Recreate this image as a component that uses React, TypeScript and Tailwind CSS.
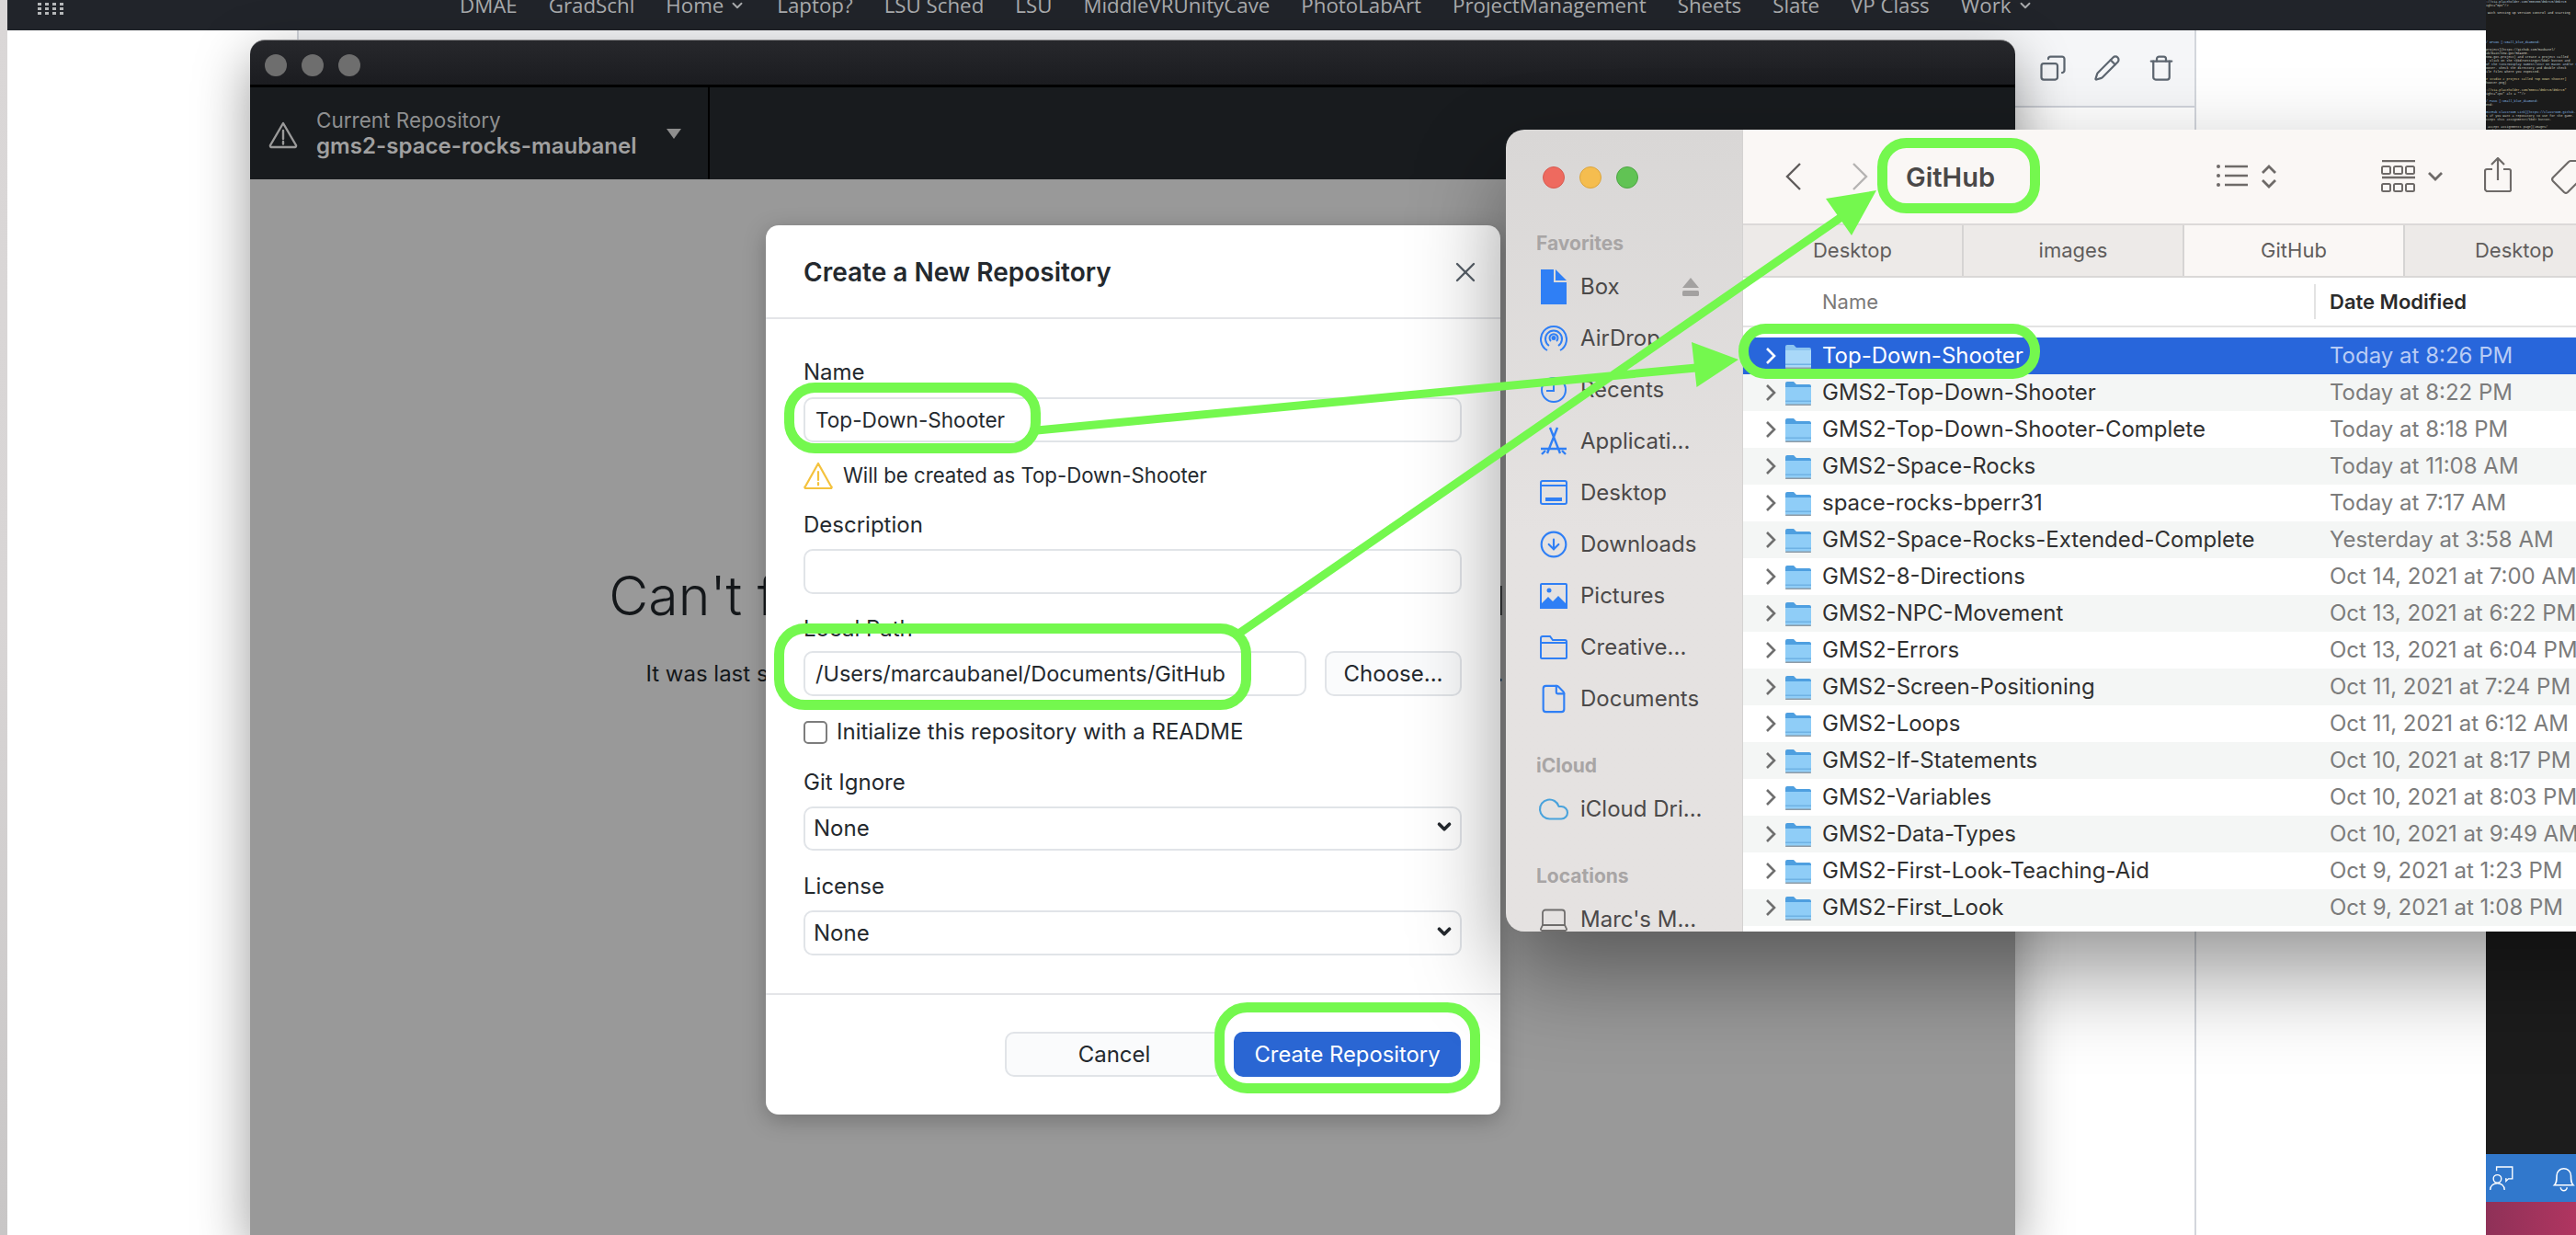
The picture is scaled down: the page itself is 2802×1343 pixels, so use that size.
import {
  ChevronDown,
  CircleArrowDown,
  Cloud,
  Copy,
  File,
  Laptop,
  Pencil,
  Trash,
  X,
} from "lucide-react";
import type { ReactNode } from "react";

const INTER = "font-['Inter',sans-serif]";

const navLinks = [
  ["DMAE", false],
  ["GradSchl", false],
  ["Home", true],
  ["Laptop?", false],
  ["LSU Sched", false],
  ["LSU", false],
  ["MiddleVRUnityCave", false],
  ["PhotoLabArt", false],
  ["ProjectManagement", false],
  ["Sheets", false],
  ["Slate", false],
  ["VP Class", false],
  ["Work", true],
] as const;

const files = [
  ["Top-Down-Shooter", "Today at 8:26 PM"],
  ["GMS2-Top-Down-Shooter", "Today at 8:22 PM"],
  ["GMS2-Top-Down-Shooter-Complete", "Today at 8:18 PM"],
  ["GMS2-Space-Rocks", "Today at 11:08 AM"],
  ["space-rocks-bperr31", "Today at 7:17 AM"],
  ["GMS2-Space-Rocks-Extended-Complete", "Yesterday at 3:58 AM"],
  ["GMS2-8-Directions", "Oct 14, 2021 at 7:00 AM"],
  ["GMS2-NPC-Movement", "Oct 13, 2021 at 6:22 PM"],
  ["GMS2-Errors", "Oct 13, 2021 at 6:04 PM"],
  ["GMS2-Screen-Positioning", "Oct 11, 2021 at 7:24 PM"],
  ["GMS2-Loops", "Oct 11, 2021 at 6:12 AM"],
  ["GMS2-If-Statements", "Oct 10, 2021 at 8:17 PM"],
  ["GMS2-Variables", "Oct 10, 2021 at 8:03 PM"],
  ["GMS2-Data-Types", "Oct 10, 2021 at 9:49 AM"],
  ["GMS2-First-Look-Teaching-Aid", "Oct 9, 2021 at 1:23 PM"],
  ["GMS2-First_Look", "Oct 9, 2021 at 1:08 PM"],
];

// each entry is one 4px line of the editor behind the windows, "" is a blank line
const codeLines: [string, string][] = [
  ["#b4c6d8", "://via.placeholder.com/300x50/d5b7c5/d5b7c5"],
  ["#cfcfc2", "ight=\"0px\"/>"],
  ["", ""],
  ["#dcdcd0", " with setting up version control and starting"],
  ["", ""],
  ["", ""],
  ["", ""],
  ["", ""],
  ["", ""],
  ["", ""],
  ["", ""],
  ["#86bbe4", "/ DPCOK [:small_blue_diamond:"],
  ["", ""],
  ["#cfcfc2", "project](https://github.com/maubanel/"],
  ["#cfcfc2", "ub/main/new-got/README."],
  ["#cfcfc2", "new-got-project) and create a project called"],
  ["#cfcfc2", ". Click on the <kbd>Settings</kbd> button and"],
  ["#b4c6d8", "of the <ins>Display Names</ins> on macOS and/or Windows"],
  ["#cfcfc2", "ooter. Check the directory and double check"],
  ["#cfcfc2", "ile files where you expected."],
  ["", ""],
  ["#d8c690", "e studio 2 project called Top Down Shooter]"],
  ["#cfcfc2", "hooter.png)"],
  ["", ""],
  ["#d8c690", "://via.placeholder.com/500x2/d5b7c5/d5b7c5\""],
  ["#cfcfc2", "ight=\"2px\" alt = \"\"/>"],
  ["", ""],
  ["#86bbe4", "/ PUCK [:small_blue_diamond:"],
  ["#cfcfc2", "end:"],
  ["", ""],
  ["#86bbe4", "GitHub Classroom Link](https://classroom.github."],
  ["#cfcfc2", "s if you want a repository to use for the game."],
  ["#cfcfc2", "ccept this assignment</kbd> button."],
  ["", ""],
  ["#cfcfc2", " accept assignments page](images/"],
  ["#cfcfc2", "ome/"],
];

function Folder({ selected }: { selected?: boolean }) {
  return (
    <svg width="28" height="27" viewBox="0 0 28 27" className="shrink-0">
      <path d="M0 3a2 2 0 0 1 2-2h7l3 3h14a2 2 0 0 1 2 2v5H0z" fill={selected ? "#8cc4f0" : "#4e9fe0"} />
      <path d="M0 7h28v18a1.5 1.5 0 0 1-1.5 1.5h-25A1.5 1.5 0 0 1 0 25z" fill={selected ? "#a9d8f8" : "#8fcdf7"} />
      <rect x="0" y="21.5" width="28" height="1.5" fill="#6fb2e4" />
      <rect x="0" y="25.5" width="28" height="1.5" rx="0.7" fill="#8e9ba6" />
    </svg>
  );
}

function Disclosure({ selected }: { selected?: boolean }) {
  return (
    <svg width="12" height="20" viewBox="0 0 12 20" className="shrink-0">
      <path d="M2 2l8 8-8 8" fill="none" stroke={selected ? "#ffffff" : "#6f6f6f"} strokeWidth="2.6" />
    </svg>
  );
}

const BLUE = "#2f7ff5";

const sidebarIcons = {
  box: (
    <svg width="28" height="38" viewBox="0 0 28 38">
      <path d="M0 0h14v14h14v24H0z" fill={BLUE} />
      <path d="M16 0l12 12H16z" fill={BLUE} />
    </svg>
  ),
  airdrop: (
    <svg width="30" height="32" viewBox="0 0 30 32" fill="none" stroke={BLUE} strokeWidth="2">
      <path d="M8 29A14 14 0 1 1 22 29" />
      <path d="M10 24A9 9 0 1 1 20 24" />
      <path d="M12 19A4.5 4.5 0 1 1 18 19" />
      <circle cx="15" cy="15.500" r="1.500" fill={BLUE} />
    </svg>
  ),
  recents: (
    <svg width="30" height="30" viewBox="0 0 30 30" fill="none" stroke={BLUE} strokeWidth="2">
      <circle cx="15" cy="15" r="13" />
      <path d="M15 6v10H7" />
    </svg>
  ),
  apps: (
    <svg width="30" height="32" viewBox="0 0 30 32" fill="none" stroke={BLUE} strokeWidth="2.4">
      <path d="M11 1l11 28M19 1L8 29M1 24h28" />
      <path d="M2 30l4-4M28 30l-4-4" />
    </svg>
  ),
  desktop: (
    <svg width="30" height="28" viewBox="0 0 30 28" fill="none" stroke={BLUE} strokeWidth="2">
      <rect x="1" y="1" width="28" height="25" rx="2" />
      <path d="M1 6h28" />
      <rect x="6" y="19" width="18" height="4" fill={BLUE} stroke="none" />
    </svg>
  ),
  downloads: <CircleArrowDown size={32} color={BLUE} strokeWidth={1.6} />,
  pictures: (
    <svg width="30" height="28" viewBox="0 0 30 28">
      <rect x="0" y="0" width="30" height="28" rx="2" fill={BLUE} />
      <rect x="2" y="2" width="26" height="20" fill="#e5e2e1" />
      <circle cx="10" cy="8" r="2.500" fill={BLUE} />
      <path d="M0 24l9-9 5 5 6-6 10 10v4H0z" fill={BLUE} />
    </svg>
  ),
  creative: (
    <svg width="30" height="26" viewBox="0 0 30 26" fill="none" stroke={BLUE} strokeWidth="2">
      <path d="M1 3a2 2 0 0 1 2-2h8l3 4h13a2 2 0 0 1 2 2v17a1 1 0 0 1-1 1H2a1 1 0 0 1-1-1z" />
      <path d="M1 8h28" />
    </svg>
  ),
  documents: <File size={34} color={BLUE} strokeWidth={1.5} />,
  cloud: <Cloud size={36} color="#4aa3dc" strokeWidth={1.4} />,
  laptop: <Laptop size={38} color="#6f6d6c" strokeWidth={1.2} />,
};

function SidebarHeading({ children, className }: { children: ReactNode; className: string }) {
  return <div className={`h-[28px] pl-[33px] text-[21px] font-bold leading-[28px] text-[#a8a5a5] ${className}`}>{children}</div>;
}

function SidebarItem({ icon, label, trailing }: { icon: ReactNode; label: string; trailing?: ReactNode }) {
  return (
    <div className="flex h-[56px] items-center">
      <div className="flex w-[81px] shrink-0 justify-center pl-[34px] pr-[11px]">{icon}</div>
      <span className="whitespace-nowrap text-[24px] text-[#4b4949]">{label}</span>
      {trailing}
    </div>
  );
}

function Finder() {
  return (
    <div className={`absolute left-[1638px] top-[141px] flex h-[872px] w-[1300px] overflow-hidden rounded-l-[20px] shadow-[0_44px_100px_rgba(0,0,0,0.42)] ${INTER}`}>
      <aside className="w-[258px] shrink-0 overflow-hidden border-r border-[#d4d2d1] bg-gradient-to-b from-[#d9d7d6] via-[#e5e2e1] to-[#e5e2e1]">
        <div className="mb-[46px] mt-[40px] flex gap-[16px] pl-[40px]">
          <span className="h-[24px] w-[24px] rounded-full border border-[#d85a50] bg-[#ee6a5f]" />
          <span className="h-[24px] w-[24px] rounded-full border border-[#dca53c] bg-[#f5bd4f]" />
          <span className="h-[24px] w-[24px] rounded-full border border-[#4ea544] bg-[#61c354]" />
        </div>
        <SidebarHeading className="mb-[5px]">Favorites</SidebarHeading>
        <SidebarItem
          icon={sidebarIcons.box}
          label="Box"
          trailing={
            <svg width="18" height="20" viewBox="0 0 18 20" className="ml-[68px]">
              <path d="M9 0l9 11H0z" fill="#a3a1a0" />
              <rect x="0" y="14" width="18" height="6" rx="1.500" fill="#a3a1a0" />
            </svg>
          }
        />
        <SidebarItem icon={sidebarIcons.airdrop} label="AirDrop" />
        <SidebarItem icon={sidebarIcons.recents} label="Recents" />
        <SidebarItem icon={sidebarIcons.apps} label="Applicati..." />
        <SidebarItem icon={sidebarIcons.desktop} label="Desktop" />
        <SidebarItem icon={sidebarIcons.downloads} label="Downloads" />
        <SidebarItem icon={sidebarIcons.pictures} label="Pictures" />
        <SidebarItem icon={sidebarIcons.creative} label="Creative..." />
        <SidebarItem icon={sidebarIcons.documents} label="Documents" />
        <SidebarHeading className="mb-[5px] mt-[31px]">iCloud</SidebarHeading>
        <SidebarItem icon={sidebarIcons.cloud} label="iCloud Dri..." />
        <SidebarHeading className="mb-[5px] mt-[31px]">Locations</SidebarHeading>
        <SidebarItem icon={sidebarIcons.laptop} label="Marc's M..." />
      </aside>

      <div className="flex-1 bg-white">
        <div className="flex h-[104px] items-center border-b-2 border-[#dcd9d8] bg-[#faf7f5] pl-[46px]">
          <svg width="18" height="30" viewBox="0 0 18 30" fill="none" stroke="#5f5c5b" strokeWidth="2.4">
            <path d="M16 1L2 15l14 14" />
          </svg>
          <svg width="18" height="30" viewBox="0 0 18 30" fill="none" stroke="#b5b3b2" strokeWidth="2.4" className="ml-[54px]">
            <path d="M2 1l14 14L2 29" />
          </svg>
          <span className="ml-[41px] w-[338px] text-[29px] font-semibold leading-none text-[#4a4848]">GitHub</span>
          <svg width="34" height="26" viewBox="0 0 34 26" className="-mt-[2px]">
            <circle cx="2" cy="3" r="2" fill="#6e6a68" />
            <circle cx="2" cy="13" r="2" fill="#6e6a68" />
            <circle cx="2" cy="23" r="2" fill="#6e6a68" />
            <path d="M9 3h25M9 13h25M9 23h25" stroke="#6e6a68" strokeWidth="2.4" />
          </svg>
          <svg width="18" height="28" viewBox="0 0 18 28" fill="none" stroke="#6e6a68" strokeWidth="2.8" className="ml-[14px]">
            <path d="M2 10l7-7 7 7M2 18l7 7 7-7" />
          </svg>
          <svg width="38" height="36" viewBox="0 0 38 36" fill="none" stroke="#6e6a68" strokeWidth="2" className="ml-[113px]">
            <path d="M1 1h36M1 19h36" strokeWidth="2.4" />
            <rect x="1" y="7" width="9" height="8" rx="1.500" />
            <rect x="14" y="7" width="9" height="8" rx="1.500" />
            <rect x="27" y="7" width="9" height="8" rx="1.500" />
            <rect x="1" y="26" width="9" height="8" rx="1.500" />
            <rect x="14" y="26" width="9" height="8" rx="1.500" />
            <rect x="27" y="26" width="9" height="8" rx="1.500" />
          </svg>
          <svg width="18" height="12" viewBox="0 0 18 12" fill="none" stroke="#6e6a68" strokeWidth="2.8" className="ml-[12px]">
            <path d="M2 2l7 7 7-7" />
          </svg>
          <svg width="30" height="38" viewBox="0 0 30 38" fill="none" stroke="#6e6a68" strokeWidth="2.200" className="ml-[44px] -mt-[4px]">
            <path d="M9 13H3a2 2 0 0 0-2 2v19a3 3 0 0 0 2 3h24a2 2 0 0 0 2-3V15a2 2 0 0 0-2-2h-6" />
            <path d="M15 25V2M8 8l7-7 7 7" />
          </svg>
          <svg width="38" height="38" viewBox="0 0 38 38" fill="none" stroke="#6e6a68" strokeWidth="2.200" className="ml-[43px]">
            <path d="M2 20L19 3a3 3 0 0 1 2-1h12a3 3 0 0 1 3 3v12a3 3 0 0 1-1 2L18 36a3 3 0 0 1-4 0L2 24a3 3 0 0 1 0-4z" />
          </svg>
        </div>

        <div className="flex h-[57px] border-b-2 border-[#dad8d7]">
          {["Desktop", "images", "GitHub", "Desktop"].map((tab, i) => (
            <div
              key={i}
              className={`flex w-[240px] shrink-0 items-center justify-center border-r-2 border-[#d6d4d3] text-[22px] text-[#605d5c] ${
                i === 2 ? "bg-[#faf7f5]" : "bg-[#edeae8]"
              }`}
            >
              {tab}
            </div>
          ))}
        </div>

        <div className="flex h-[54px] items-center border-b-2 border-[#e3e3e3] text-[22px]">
          <div className="flex h-[38px] w-[623px] items-center border-r-2 border-[#e3e3e3] pl-[86px] text-[#7b7978]">Name</div>
          <div className="pl-[15px] font-semibold text-[#2b2b2b]">Date Modified</div>
        </div>

        <div className="mt-[11px]">
          {files.map(([name, date], i) => (
            <div
              key={name}
              className={`flex h-[40px] items-center text-[24px] ${
                i === 0 ? "bg-[#2866db] text-white" : i % 2 === 1 ? "bg-[#f4f6f5] text-[#303030]" : "text-[#303030]"
              }`}
            >
              <div className="flex w-[638px] shrink-0 items-center pl-[24px]">
                <Disclosure selected={i === 0} />
                <div className="ml-[10px]">
                  <Folder selected={i === 0} />
                </div>
                <span className="ml-[12px] whitespace-nowrap">{name}</span>
              </div>
              <span className={i === 0 ? "whitespace-nowrap text-[#b8ccf5]" : "whitespace-nowrap text-[#7c7c7c]"}>{date}</span>
            </div>
          ))}
        </div>
      </div>
    </div>
  );
}

function FieldLabel({ children, className }: { children: ReactNode; className: string }) {
  return <div className={`h-[28px] text-[24px] leading-[28px] text-[#24292e] ${className}`}>{children}</div>;
}

function TextBox({ value, className = "h-[49px] text-[23.500px]" }: { value?: string; className?: string }) {
  return (
    <div className={`flex items-center rounded-[10px] border-2 border-[#e1e4e8] bg-white px-[11px] text-[#24292e] ${className}`}>
      {value}
    </div>
  );
}

function SelectBox({ className }: { className: string }) {
  return (
    <div className={`flex items-center justify-between rounded-[10px] border-2 border-[#e1e4e8] bg-white pl-[9px] pr-[6px] text-[24px] text-[#24292e] ${className}`}>
      None
      <ChevronDown size={22} strokeWidth={4} color="#24292e" className="-mt-[4px]" />
    </div>
  );
}

function NewRepoDialog() {
  return (
    <div className="absolute left-[561px] top-[202px] flex h-[967px] w-[799px] flex-col rounded-[14px] bg-white shadow-[0_6px_24px_rgba(0,0,0,0.25)]">
      <div className="flex h-[102px] shrink-0 items-center justify-between border-b-2 border-[#e4e5e8] pl-[41px] pr-[20px]">
        <h2 className="mt-[2px] text-[28px] font-semibold text-[#24292e]">Create a New Repository</h2>
        <X size={36} strokeWidth={1.6} color="#586069" className="mt-[2px]" />
      </div>

      <div className="flex-1 pl-[41px] pr-[42px] pt-[44px]">
        <FieldLabel className="mb-[13px]">Name</FieldLabel>
        <TextBox value="Top-Down-Shooter" className="h-[49px] text-[22.600px]" />
        <div className="mt-[21px] flex h-[30px] items-center gap-[11px] text-[22.200px] text-[#24292e]">
          <svg width="32" height="30" viewBox="0 0 32 30" fill="none" stroke="#f4c23d" strokeWidth="2.200">
            <path d="M16 2L2 27a1 1 0 0 0 1 2h26a1 1 0 0 0 1-2z" strokeLinejoin="round" />
            <path d="M16 11v9M16 23v2.500" strokeLinecap="round" />
          </svg>
          Will be created as Top-Down-Shooter
        </div>
        <FieldLabel className="mb-[12px] mt-[25px]">Description</FieldLabel>
        <TextBox />
        <FieldLabel className="mb-[10px] mt-[24px]">Local Path</FieldLabel>
        <div className="flex gap-[20px]">
          <TextBox value="/Users/marcaubanel/Documents/GitHub" className="h-[49px] flex-1 text-[23.500px]" />
          <div className="flex h-[49px] w-[149px] items-center justify-center rounded-[10px] border-2 border-[#e1e4e8] bg-[#fafbfc] text-[24px] text-[#24292e]">
            Choose...
          </div>
        </div>
        <div className="mt-[27px] flex h-[24px] items-center gap-[10px] text-[24px] text-[#24292e]">
          <span className="h-[25px] w-[26px] rounded-[5px] border-2 border-[#7d7d7d] bg-white" />
          Initialize this repository with a README
        </div>
        <FieldLabel className="mb-[12px] mt-[29px]">Git Ignore</FieldLabel>
        <SelectBox className="h-[48px]" />
        <FieldLabel className="mb-[12px] mt-[25px]">License</FieldLabel>
        <SelectBox className="h-[49px]" />
      </div>

      <div className="flex h-[132px] shrink-0 justify-end gap-[11px] border-t-2 border-[#e4e5e8] pr-[43px] pt-[40px]">
        <div className="flex h-[49px] w-[238px] items-center justify-center rounded-[10px] border-2 border-[#e1e4e8] bg-[#fafbfc] text-[24px] text-[#24292e]">
          Cancel
        </div>
        <div className="flex h-[49px] w-[247px] items-center justify-center rounded-[10px] bg-[#2a66d3] text-[23.800px] text-white">
          Create Repository
        </div>
      </div>
    </div>
  );
}

function GitHubDesktop() {
  return (
    <div className={`absolute bottom-0 left-[272px] top-[43px] flex w-[1920px] flex-col rounded-t-[16px] shadow-[0_20px_60px_rgba(0,0,0,0.4)] ${INTER}`}>
      <div className="flex h-[52px] shrink-0 items-center gap-[16px] rounded-t-[16px] border-b-[3px] border-black border-t border-t-[#8e8e90] bg-gradient-to-b from-[#27282c] to-[#1b1c20] pl-[16px] pt-[5px]">
        <span className="h-[24px] w-[24px] rounded-full bg-[#6e6e6e]" />
        <span className="h-[24px] w-[24px] rounded-full bg-[#6e6e6e]" />
        <span className="h-[24px] w-[24px] rounded-full bg-[#6e6e6e]" />
      </div>
      <div className="flex h-[100px] shrink-0 bg-[#181b1e]">
        <div className="flex w-[500px] items-center border-r-2 border-black pl-[20px]">
          <svg width="32" height="30" viewBox="0 0 32 30" fill="none" stroke="#9a9a9a" strokeWidth="2.400" className="mt-[4px]">
            <path d="M16 2L2 26a1.500 1.500 0 0 0 1 2h26a1.500 1.500 0 0 0 1-2z" strokeLinejoin="round" />
            <path d="M16 10v9M16 22v2.500" strokeLinecap="round" />
          </svg>
          <div className="ml-[20px] w-[381px]">
            <div className="text-[22.500px] leading-[28px] text-[#8e8f90]">Current Repository</div>
            <div className="text-[24.100px] font-semibold leading-[28px] text-[#a0a0a0]">gms2-space-rocks-maubanel</div>
          </div>
          <svg width="16" height="11" viewBox="0 0 16 11">
            <path d="M0 0h16L8 11z" fill="#8e8e8e" />
          </svg>
        </div>
      </div>
      <div className="flex-1 bg-[#999999] pl-[14px] pt-[417px] text-center text-[#14171a]">
        <h1 className="whitespace-nowrap text-[59px] font-light leading-[72px]">Can't find "gms2-space-rocks-maubanel"</h1>
        <p className="mt-[31px] whitespace-nowrap pr-[36px] text-[24px] leading-[36px]">
          It was last seen at /Users/marcaubanel/Documents/gms2-space-rocks-maubanel.<span className="text-[#0a3f9c]"> Locate...</span>
        </p>
      </div>
      <NewRepoDialog />
    </div>
  );
}

function Annotations() {
  return (
    <svg width="2802" height="1343" viewBox="0 0 2802 1343" fill="none" stroke="#74f84e" strokeWidth="11" className="absolute left-0 top-0">
      <rect x="858.500" y="421.500" width="268" height="66" rx="28" />
      <rect x="847.500" y="683.500" width="508" height="83" rx="28" />
      <rect x="1326.500" y="1095.500" width="278" height="88" rx="30" />
      <rect x="2047.500" y="155.500" width="166" height="71" rx="26" />
      <rect x="1896.500" y="357.500" width="317" height="49" rx="24" />
      <path d="M1128 468L1845 400M1346 690L2003 236" strokeWidth="9" />
      <path d="M1891 391L1840 372L1845.500 421zM2041 207L1986 216L2014 256z" fill="#74f84e" stroke="none" />
    </svg>
  );
}

export default function App() {
  return (
    <div className="relative h-[1343px] w-[2802px] overflow-hidden bg-white">
      {/* sliver of the window on the far left */}
      <div className="absolute bottom-0 left-0 top-0 w-[8px] bg-gradient-to-b from-[#dad7d7] via-[#d8d5d5] to-[#c8c6c6]" />

      {/* page underneath the app windows */}
      <div className="absolute bottom-0 left-[323px] top-[33px] w-[2066px] border-x-2 border-[#d3d6dc]">
        <div className="flex h-[84px] items-center justify-end gap-[29px] border-b-2 border-[#d0d3da] bg-[#f5f6f8] pr-[21px] text-[#5d6670]">
          <Copy size={30} strokeWidth={1.8} className="-scale-x-100" />
          <Pencil size={30} strokeWidth={1.8} />
          <Trash size={30} strokeWidth={1.8} />
        </div>
      </div>

      {/* browser bookmarks bar */}
      <div className="absolute left-[8px] top-0 flex h-[33px] w-[2696px] items-start overflow-hidden bg-[#21242a] font-['Open_Sans',sans-serif] text-[22.300px] leading-[24px] text-[#a9abad]">
        <div className="ml-[33px] mt-[3px] grid grid-cols-4 gap-x-[4px] gap-y-[2px]">
          {Array.from({ length: 12 }, (_, i) => (
            <span key={i} className="h-[3px] w-[4px] bg-[#b5b7b9]" />
          ))}
        </div>
        <div className="-mt-[6px] ml-[431px] flex gap-[34px]">
          {navLinks.map(([label, hasMenu]) => (
            <span key={label} className="flex items-center gap-[6px] whitespace-nowrap">
              {label}
              {hasMenu && <ChevronDown size={18} strokeWidth={2.5} />}
            </span>
          ))}
        </div>
      </div>

      {/* code editor on the right edge */}
      <div className="absolute bottom-0 left-[2704px] top-0 flex w-[98px] flex-col bg-[#1c1c1c]">
        <div className="flex-1 overflow-hidden font-['Liberation_Mono',monospace] text-[3.400px] leading-[4px]">
          {codeLines.map(([color, line], i) => (
            <div key={i} className="h-[4px] whitespace-pre" style={{ color: color || undefined }}>
              {line}
            </div>
          ))}
        </div>
        <div className="flex h-[52px] shrink-0 items-center gap-[40px] bg-[#3178cc] pl-[3px] text-white">
          <svg width="32" height="32" viewBox="0 0 32 32" fill="none" stroke="#ffffff" strokeWidth="1.600">
            <circle cx="11" cy="17" r="5" />
            <path d="M2 31c0-11 18-11 18 0M10 7V2h20v15h-5l-3 3v-3h-1" />
          </svg>
          <svg width="32" height="34" viewBox="0 0 32 34" fill="none" stroke="#ffffff" strokeWidth="1.800">
            <path d="M4 26c3-3 3-6 3-12a9 9 0 0 1 18 0c0 6 0 9 3 12z" />
            <path d="M12 29a4 4 0 0 0 8 0" />
          </svg>
        </div>
        <div className="h-[36px] shrink-0 bg-gradient-to-r from-[#8f3158] to-[#b03560]" />
      </div>

      <GitHubDesktop />
      <Finder />
      <Annotations />
    </div>
  );
}
